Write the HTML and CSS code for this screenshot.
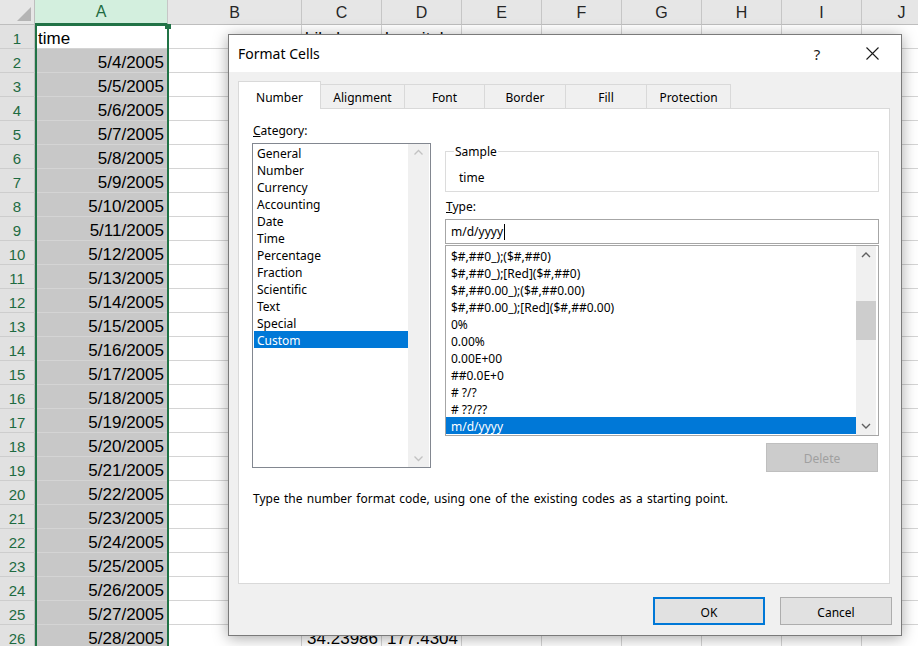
FILE: index.html
```html
<!DOCTYPE html>
<html>
<head>
<meta charset="utf-8">
<title>Format Cells</title>
<link rel="stylesheet" href="styles.css">
</head>
<body>
<div class="sheet">
  <div class="grid">
    <div class="corner"><svg width="35" height="25" viewBox="0 0 35 25"><polygon points="31,7 31,21 17,21" fill="#b4b4b4"/></svg></div>
    <div class="ch sel">A</div><div class="ch">B</div><div class="ch">C</div><div class="ch">D</div><div class="ch">E</div><div class="ch">F</div><div class="ch">G</div><div class="ch">H</div><div class="ch">I</div><div class="ch">J</div>

    <div class="rh">1</div><div class="c act">time</div><div></div><div class="c">bikelanes</div><div class="c">hospitals</div><div></div><div></div><div></div><div></div><div></div><div></div>
    <div class="rh">2</div><div class="c s">5/4/2005</div><div></div><div></div><div></div><div></div><div></div><div></div><div></div><div></div><div></div>
    <div class="rh">3</div><div class="c s">5/5/2005</div><div></div><div></div><div></div><div></div><div></div><div></div><div></div><div></div><div></div>
    <div class="rh">4</div><div class="c s">5/6/2005</div><div></div><div></div><div></div><div></div><div></div><div></div><div></div><div></div><div></div>
    <div class="rh">5</div><div class="c s">5/7/2005</div><div></div><div></div><div></div><div></div><div></div><div></div><div></div><div></div><div></div>
    <div class="rh">6</div><div class="c s">5/8/2005</div><div></div><div></div><div></div><div></div><div></div><div></div><div></div><div></div><div></div>
    <div class="rh">7</div><div class="c s">5/9/2005</div><div></div><div></div><div></div><div></div><div></div><div></div><div></div><div></div><div></div>
    <div class="rh">8</div><div class="c s">5/10/2005</div><div></div><div></div><div></div><div></div><div></div><div></div><div></div><div></div><div></div>
    <div class="rh">9</div><div class="c s">5/11/2005</div><div></div><div></div><div></div><div></div><div></div><div></div><div></div><div></div><div></div>
    <div class="rh">10</div><div class="c s">5/12/2005</div><div></div><div></div><div></div><div></div><div></div><div></div><div></div><div></div><div></div>
    <div class="rh">11</div><div class="c s">5/13/2005</div><div></div><div></div><div></div><div></div><div></div><div></div><div></div><div></div><div></div>
    <div class="rh">12</div><div class="c s">5/14/2005</div><div></div><div></div><div></div><div></div><div></div><div></div><div></div><div></div><div></div>
    <div class="rh">13</div><div class="c s">5/15/2005</div><div></div><div></div><div></div><div></div><div></div><div></div><div></div><div></div><div></div>
    <div class="rh">14</div><div class="c s">5/16/2005</div><div></div><div></div><div></div><div></div><div></div><div></div><div></div><div></div><div></div>
    <div class="rh">15</div><div class="c s">5/17/2005</div><div></div><div></div><div></div><div></div><div></div><div></div><div></div><div></div><div></div>
    <div class="rh">16</div><div class="c s">5/18/2005</div><div></div><div></div><div></div><div></div><div></div><div></div><div></div><div></div><div></div>
    <div class="rh">17</div><div class="c s">5/19/2005</div><div></div><div></div><div></div><div></div><div></div><div></div><div></div><div></div><div></div>
    <div class="rh">18</div><div class="c s">5/20/2005</div><div></div><div></div><div></div><div></div><div></div><div></div><div></div><div></div><div></div>
    <div class="rh">19</div><div class="c s">5/21/2005</div><div></div><div></div><div></div><div></div><div></div><div></div><div></div><div></div><div></div>
    <div class="rh">20</div><div class="c s">5/22/2005</div><div></div><div></div><div></div><div></div><div></div><div></div><div></div><div></div><div></div>
    <div class="rh">21</div><div class="c s">5/23/2005</div><div></div><div></div><div></div><div></div><div></div><div></div><div></div><div></div><div></div>
    <div class="rh">22</div><div class="c s">5/24/2005</div><div></div><div></div><div></div><div></div><div></div><div></div><div></div><div></div><div></div>
    <div class="rh">23</div><div class="c s">5/25/2005</div><div></div><div></div><div></div><div></div><div></div><div></div><div></div><div></div><div></div>
    <div class="rh">24</div><div class="c s">5/26/2005</div><div></div><div></div><div></div><div></div><div></div><div></div><div></div><div></div><div></div>
    <div class="rh">25</div><div class="c s">5/27/2005</div><div></div><div></div><div></div><div></div><div></div><div></div><div></div><div></div><div></div>
    <div class="rh">26</div><div class="c s">5/28/2005</div><div></div><div class="c num">34.23986</div><div class="c num">177.4304</div><div></div><div></div><div></div><div></div><div></div><div></div>
  </div>
  <div class="colsel"><span class="handle"></span></div>
</div>

<div class="dialog">
  <div class="titlebar">
    <span class="title">Format Cells</span>
    <span class="help">?</span>
    <span class="close"><svg width="13" height="13" viewBox="0 0 13 13"><path d="M0.5 0.5L12.5 12.5M12.5 0.5L0.5 12.5" stroke="#1a1a1a" stroke-width="1.1" fill="none"/></svg></span>
  </div>
  <div class="tabs">
    <div class="tab active t82">Number</div>
    <div class="tab t84">Alignment</div>
    <div class="tab t80">Font</div>
    <div class="tab t81">Border</div>
    <div class="tab t81">Fill</div>
    <div class="tab t84">Protection</div>
  </div>
  <div class="panel">
    <div class="cols">
      <div class="left">
        <div class="lbl"><u>C</u>ategory:</div>
        <div class="listbox cat">
          <div class="items">
            <div class="item">General</div>
            <div class="item">Number</div>
            <div class="item">Currency</div>
            <div class="item">Accounting</div>
            <div class="item">Date</div>
            <div class="item">Time</div>
            <div class="item">Percentage</div>
            <div class="item">Fraction</div>
            <div class="item">Scientific</div>
            <div class="item">Text</div>
            <div class="item">Special</div>
            <div class="item on">Custom</div>
          </div>
          <div class="vscroll dis">
            <svg class="arr" width="20" height="17" viewBox="0 0 20 17"><polyline points="6,10.5 10,6.5 14,10.5" fill="none" stroke="#c2c2c2" stroke-width="1.3"/></svg>
            <svg class="arr" width="20" height="17" viewBox="0 0 20 17"><polyline points="6,6.5 10,10.5 14,6.5" fill="none" stroke="#c2c2c2" stroke-width="1.3"/></svg>
          </div>
        </div>
      </div>
      <div class="right">
        <fieldset class="sample">
          <legend>Sample</legend>
          <div class="sample-val">time</div>
        </fieldset>
        <div class="lbl type-lbl"><u>T</u>ype:</div>
        <div class="input">m/d/yyyy<span class="caret"></span></div>
        <div class="listbox fmt">
          <div class="items">
            <div class="item">$#,##0_);($#,##0)</div>
            <div class="item">$#,##0_);[Red]($#,##0)</div>
            <div class="item">$#,##0.00_);($#,##0.00)</div>
            <div class="item">$#,##0.00_);[Red]($#,##0.00)</div>
            <div class="item">0%</div>
            <div class="item">0.00%</div>
            <div class="item">0.00E+00</div>
            <div class="item">##0.0E+0</div>
            <div class="item"># ?/?</div>
            <div class="item"># ??/??</div>
            <div class="item on">m/d/yyyy</div>
          </div>
          <div class="vscroll">
            <svg class="arr" width="20" height="17" viewBox="0 0 20 17"><polyline points="6,11 10,7 14,11" fill="none" stroke="#606060" stroke-width="1.4"/></svg>
            <div class="track"><div class="thumb"></div></div>
            <svg class="arr" width="20" height="17" viewBox="0 0 20 17"><polyline points="6,6 10,10 14,6" fill="none" stroke="#606060" stroke-width="1.4"/></svg>
          </div>
        </div>
        <div class="del-row"><button class="btn disabled" type="button">Delete</button></div>
      </div>
    </div>
    <p class="desc">Type the number format code, using one of the existing codes as a starting point.</p>
  </div>
  <div class="buttons">
    <button class="btn ok" type="button">OK</button>
    <button class="btn" type="button">Cancel</button>
  </div>
</div>
</body>
</html>
```

FILE: styles.css
```css
* { box-sizing: border-box; margin: 0; padding: 0; }
html, body { width: 918px; height: 646px; overflow: hidden; background: #fff; }
body { position: relative; font-family: "Liberation Sans", Arial, sans-serif; }

/* ---------- spreadsheet ---------- */
.sheet { position: relative; width: 918px; height: 646px; overflow: hidden; }
.grid {
  display: grid;
  grid-template-columns: 35px 133px 134px repeat(8, 80px);
  grid-template-rows: 25px;
  grid-auto-rows: 24px;
  width: 942px;
}
.grid > div {
  border-right: 1px solid #d4d4d4;
  border-bottom: 1px solid #d4d4d4;
  font-size: 17px;
  line-height: 23px;
  padding-top: 2px;
  white-space: nowrap;
  overflow: hidden;
  color: #000;
}
.grid > .corner { background: #e6e6e6; border-color: #bebebe; padding-top: 0; }
.grid > .corner svg { display: block; }
.grid > .ch {
  background: #e6e6e6;
  border-right-color: #c6c6c6;
  border-bottom-color: #bebebe;
  text-align: center;
  font-size: 16px;
  color: #262626;
  padding-top: 1px;
}
.grid > .ch.sel {
  background: #d3efde;
  color: #1e6b41;
  border-bottom: 2px solid #217346;
  line-height: 22px;
}
.grid > .rh {
  background: #e1e1e1;
  border-right-color: #bebebe;
  border-bottom-color: #cdcdcd;
  text-align: center;
  font-size: 15px;
  color: #1e6b41;
}
.grid > .c { padding-left: 3px; padding-right: 3px; }
.grid > .s { background: #c8c8c8; text-align: right; }
.grid > .num { text-align: right; }
.grid > .act { background: #fff; }

.colsel {
  position: absolute;
  left: 35px;
  top: 24px;
  width: 134px;
  height: 640px;
  border: 2px solid #217346;
  pointer-events: none;
}
.colsel .handle {
  position: absolute;
  right: -4px;
  top: -2px;
  width: 6px;
  height: 5px;
  background: #217346;
}

/* ---------- dialog ---------- */
.dialog {
  position: absolute;
  left: 228px;
  top: 34px;
  width: 674px;
  height: 602px;
  background: #f0f0f0;
  border: 1px solid #7a7a7a;
  box-shadow: 0 2px 14px rgba(0, 0, 0, 0.35);
  font-family: "Noto Sans", "Open Sans", sans-serif;
  font-size: 12px;
  color: #000;
}
.titlebar {
  display: flex;
  align-items: center;
  height: 37px;
  background: #fff;
  padding-left: 9px;
}
.title { font-size: 14px; color: #000; }
.help { margin-left: auto; width: 20px; text-align: center; font-size: 15px; color: #1a1a1a; }
.close { width: 46px; margin: 0 6px 0 22px; display: flex; justify-content: center; }
.close svg { display: block; }

.tabs {
  display: flex;
  align-items: flex-end;
  height: 27px;
  margin-top: 9px;
  padding-left: 9px;
}
.tab {
  height: 24px;
  padding-top: 5px;
  border: 1px solid #d9d9d9;
  border-bottom: none;
  margin-right: -1px;
  background: #f0f0f0;
  text-align: center;
  line-height: 16px;
  white-space: nowrap;
}
.tab.active {
  height: 28px;
  padding-top: 8px;
  background: #fff;
  position: relative;
  z-index: 1;
  margin-bottom: -1px;
}
.t80 { width: 81px; }
.t81 { width: 82px; }
.t82 { width: 83px; }
.t84 { width: 85px; }

.panel {
  width: 652px;
  height: 476px;
  margin-left: 9px;
  background: #fff;
  border: 1px solid #d9d9d9;
}
.cols {
  display: flex;
  align-items: flex-start;
  padding: 13px 0 0 13px;
}
.lbl { line-height: 18px; padding-left: 1px; }
.left { width: 179px; }
.left .lbl { margin-bottom: 3px; }
.right { width: 434px; margin-left: 14px; }

.listbox {
  display: flex;
  border: 1px solid #828790;
  background: #fff;
}
.listbox .items { flex: 1; }
.item { height: 17px; line-height: 17px; padding-top: 1px; white-space: nowrap; }
.item.on { background: #0078d7; color: #fff; }

.cat { height: 325px; padding: 0 1px 0 1px; }
.cat .item { padding-left: 3px; }
.cat .vscroll { width: 21px; }

.vscroll {
  display: flex;
  flex-direction: column;
  justify-content: space-between;
  background: #f0f0f0;
}
.vscroll .arr { display: block; width: 100%; }

.sample {
  margin-top: 21px;
  height: 49px;
  border: 1px solid #dcdcdc;
  padding: 0 0 0 13px;
}
.sample legend { line-height: 17px; padding: 0 1px; margin-left: -5px; }
.sample-val { margin-top: 10px; line-height: 16px; }

.type-lbl { margin-top: 6px; }
.input {
  margin-top: 3px;
  height: 25px;
  border: 1px solid #a6a6a6;
  padding: 1px 0 0 5px;
  line-height: 22px;
  display: flex;
  align-items: center;
}
.caret { display: inline-block; width: 1px; height: 16px; background: #000; margin-left: 1px; }

.fmt {
  margin-top: 1px;
  height: 191px;
  border-color: #a6a6a6;
  padding: 1px 2px 0 0;
}
.fmt .item { padding-left: 5px; }
.fmt .vscroll { width: 20px; margin-top: -1px; }
.fmt .track { flex: 1; padding-top: 38px; }
.fmt .thumb { height: 39px; background: #cdcdcd; }

.del-row { display: flex; justify-content: flex-end; margin-top: 7px; padding-right: 1px; }

.btn {
  width: 112px;
  height: 28px;
  padding-top: 2px;
  font-family: "Noto Sans", "Open Sans", sans-serif;
  font-size: 12px;
  background: #e1e1e1;
  border: 1px solid #adadad;
  color: #000;
}
.btn.disabled { height: 29px; background: #cccccc; border-color: #bfbfbf; color: #a0a0a0; }
.btn.ok { border: 2px solid #0078d7; }

.desc { margin-top: 17px; padding: 2px 0 0 14px; line-height: 16px; word-spacing: 1.2px; }

.buttons {
  display: flex;
  justify-content: flex-end;
  gap: 15px;
  margin-top: 13px;
  padding-right: 9px;
}
```
